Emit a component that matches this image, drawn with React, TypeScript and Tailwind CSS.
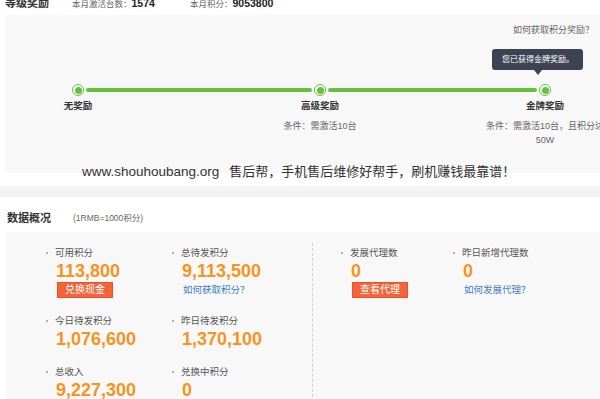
import React from 'react';

const Ring = () => (
  <div className="w-[12px] h-[12px] rounded-full border border-[#62c23e] bg-white flex items-center justify-center shrink-0">
    <div className="w-[7px] h-[7px] rounded-full bg-[#62c23e]" />
  </div>
);

const Step = ({ label, cond, children }: { label: string; cond?: React.ReactNode; children?: React.ReactNode }) => (
  <div className="relative w-[12px] flex flex-col items-center shrink-0">
    <Ring />
    <div className="mt-[4px] leading-[12px] text-[9.5px] font-bold text-[#333] whitespace-nowrap">{label}</div>
    {cond}
    {children}
  </div>
);

const Stat = ({ label, value, children }: { label: string; value: string; children?: React.ReactNode }) => (
  <div>
    <div className="flex items-center leading-[14px] text-[9.5px] text-[#555]">
      <span className="w-[2px] h-[2px] rounded-full bg-[#999] mr-[7px]" />
      {label}
    </div>
    <div className="pl-[10px] mt-[1px] leading-[20px] text-[18px] font-bold text-[#f7941e]">{value}</div>
    {children}
  </div>
);

const Btn = ({ text }: { text: string }) => (
  <div className="ml-[11px] mt-[1px] w-[56px] h-[16px] leading-[14px] text-center text-[10px] text-white bg-[#f3643a] border border-[#e5542a]">
    {text}
  </div>
);

const HelpLink = ({ text }: { text: string }) => (
  <div className="pl-[11px] mt-[1px] leading-[16px] text-[9.5px] text-[#3d7fc1]">{text}</div>
);

export default function App() {
  return (
    <div className="relative w-[600px] h-[399px] overflow-hidden bg-white font-['Liberation_Sans','Noto_Sans_CJK_SC',sans-serif]">
      {/* top header, cut off */}
      <div className="flex items-baseline h-[14px] -mt-[4px] pl-[5px] leading-[14px]">
        <div className="w-[67px] text-[11px] font-bold text-[#333]">等级奖励</div>
        <div className="w-[118px] text-[8.5px] text-[#666]">
          本月激活台数：<span className="text-[10.5px] font-bold text-[#222]">1574</span>
        </div>
        <div className="text-[8.5px] text-[#666]">
          本月积分：<span className="text-[10.5px] font-bold text-[#222]">9053800</span>
        </div>
      </div>

      {/* level rewards panel */}
      <div className="ml-[5px] mt-[5px] h-[158px] bg-[#f8f8f8] pt-[8px] pr-[6px]">
        <div className="text-right leading-[14px] text-[9px] text-[#666]">如何获取积分奖励？</div>
        <div className="flex items-start mt-[47px] ml-[67px]">
          <Step label="无奖励" />
          <div className="w-[226px] h-[4px] mt-[4px] mx-[2px] bg-[#62c23e] rounded-full shrink-0" />
          <Step
            label="高级奖励"
            cond={<div className="mt-[7px] leading-[14px] text-[9px] text-[#666] whitespace-nowrap">条件：需激活10台</div>}
          />
          <div className="w-[209px] h-[4px] mt-[4px] mx-[2px] bg-[#62c23e] rounded-full shrink-0" />
          <Step
            label="金牌奖励"
            cond={
              <div className="mt-[7px] w-[130px] shrink-0 text-center leading-[14px] text-[9px] text-[#666] whitespace-nowrap">
                条件：需激活10台，且积分达
                <br />
                50W
              </div>
            }
          >
            <div className="absolute left-[-47px] top-[-35px] w-[91px] h-[21px] rounded-[3px] bg-[#3d4352] pl-[10px] leading-[21px] text-[8px] text-white whitespace-nowrap">
              您已获得金牌奖励。
              <div className="absolute left-[42px] top-[21px] w-0 h-0 border-l-[4px] border-r-[4px] border-t-[5px] border-l-transparent border-r-transparent border-t-[#3d4352]" />
            </div>
          </Step>
        </div>
      </div>

      {/* watermark */}
      <div className="absolute left-[82px] top-[161px] leading-[20px] text-[#333] whitespace-nowrap">
        <span className="text-[13.5px]">www.shouhoubang.org</span>
        <span className="ml-[10px] text-[13px]">售后帮，手机售后维修好帮手，刷机赚钱最靠谱！</span>
      </div>

      <div className="mt-[13px] h-[11px] bg-[#f3f3f3]" />

      {/* data overview */}
      <div className="flex items-center mt-[11px] h-[20px] pl-[7px]">
        <div className="w-[66px] text-[11px] font-bold text-[#333]">数据概况</div>
        <div className="text-[8.5px] text-[#666]">(1RMB=1000积分)</div>
      </div>

      <div className="ml-[6px] mt-[4px] h-[180px] bg-[#f8f8f8] flex pl-[40px] pt-[14px]">
        <div className="w-[266px] grid grid-cols-[126px_140px] gap-y-[16px] content-start">
          <Stat label="可用积分" value="113,800">
            <Btn text="兑换现金" />
          </Stat>
          <Stat label="总待发积分" value="9,113,500">
            <HelpLink text="如何获取积分？" />
          </Stat>
          <Stat label="今日待发积分" value="1,076,600" />
          <Stat label="昨日待发积分" value="1,370,100" />
          <Stat label="总收入" value="9,227,300" />
          <Stat label="兑换中积分" value="0" />
        </div>
        <div className="-mt-[3px] border-l border-dashed border-[#cfcfcf]" />
        <div className="pl-[28px] grid grid-cols-[112px_140px] content-start">
          <Stat label="发展代理数" value="0">
            <Btn text="查看代理" />
          </Stat>
          <Stat label="昨日新增代理数" value="0">
            <HelpLink text="如何发展代理？" />
          </Stat>
        </div>
      </div>
    </div>
  );
}
